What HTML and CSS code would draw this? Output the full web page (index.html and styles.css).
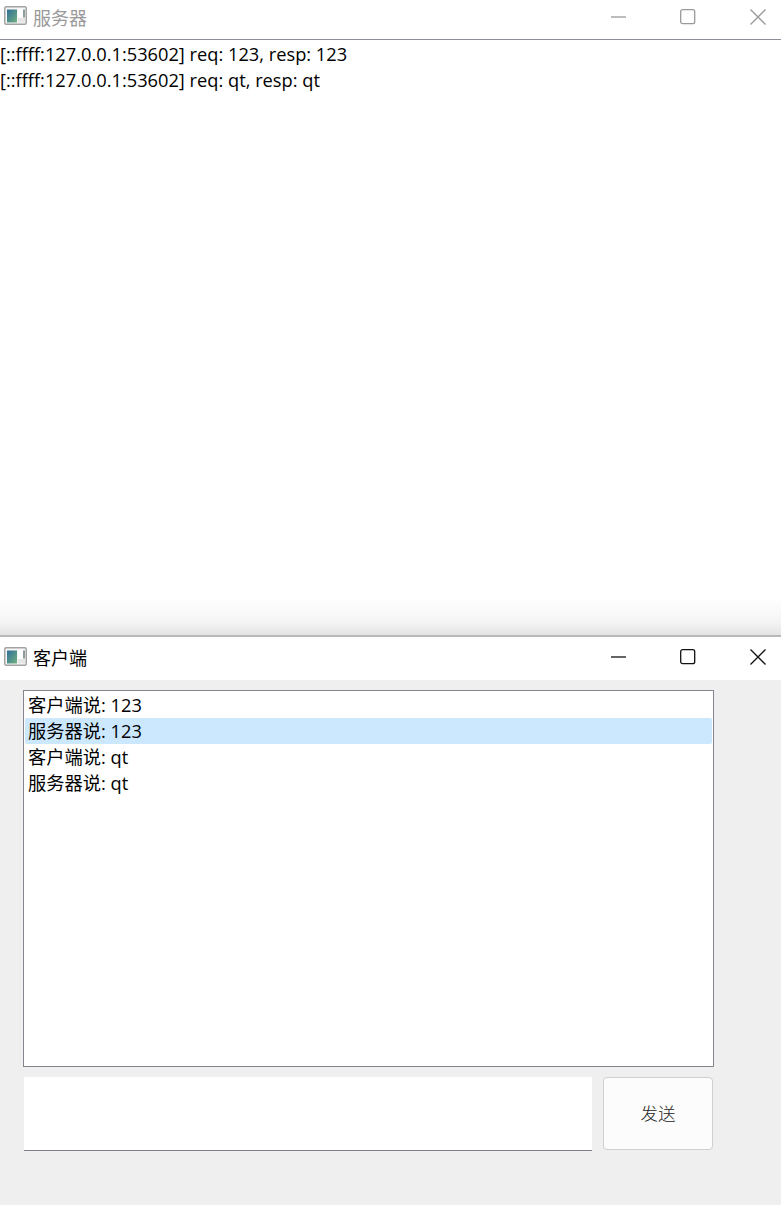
FILE: index.html
```html
<!DOCTYPE html>
<html lang="zh">
<head>
<meta charset="utf-8">
<title>服务器 / 客户端</title>
<link rel="stylesheet" href="styles.css">
</head>
<body>
<section class="window server">
  <header class="titlebar inactive">
    <svg class="appicon" width="23" height="19" viewBox="0 0 23 19">
      <defs>
        <linearGradient id="g" x1="0" y1="0" x2="1" y2="1"><stop offset="0" stop-color="#2f6f9a"/><stop offset="1" stop-color="#72b080"/></linearGradient>
      </defs>
      <rect x=".75" y=".75" width="21.500" height="17.500" rx="1.500" fill="#f6f6f6" stroke="#a3a3a3" stroke-width="1.500"/>
      <rect x="3" y="3.500" width="10" height="13" fill="url(#g)"/>
      <rect x="14" y="3.500" width="5" height="8" fill="#fff"/>
      <rect x="19" y="3.500" width="2" height="8" fill="#8f9a9a"/>
      <rect x="14" y="12" width="7" height="4.500" fill="#e6e6e6"/>
    </svg>
    <span class="title">服务器</span>
    <div class="controls">
      <svg width="16" height="16" viewBox="0 0 16 16"><path d="M0 8H15"/></svg>
      <svg width="16" height="16" viewBox="0 0 16 16"><rect x=".7" y=".7" width="14" height="14" rx="2"/></svg>
      <svg width="17" height="16" viewBox="0 0 17 16"><path d="M1.500.5l15 15M16.500.5l-15 15"/></svg>
    </div>
  </header>
  <div class="log">
    <div>[::ffff:127.0.0.1:53602] req: 123, resp: 123</div>
    <div>[::ffff:127.0.0.1:53602] req: qt, resp: qt</div>
  </div>
</section>
<section class="window client">
  <header class="titlebar">
    <svg class="appicon" width="23" height="19" viewBox="0 0 23 19">
      <rect x=".75" y=".75" width="21.500" height="17.500" rx="1.500" fill="#f6f6f6" stroke="#a3a3a3" stroke-width="1.500"/>
      <rect x="3" y="3.500" width="10" height="13" fill="url(#g)"/>
      <rect x="14" y="3.500" width="5" height="8" fill="#fff"/>
      <rect x="19" y="3.500" width="2" height="8" fill="#8f9a9a"/>
      <rect x="14" y="12" width="7" height="4.500" fill="#e6e6e6"/>
    </svg>
    <span class="title">客户端</span>
    <div class="controls">
      <svg width="16" height="16" viewBox="0 0 16 16"><path d="M0 8H15"/></svg>
      <svg width="16" height="16" viewBox="0 0 16 16"><rect x=".7" y=".7" width="14" height="14" rx="2"/></svg>
      <svg width="17" height="16" viewBox="0 0 17 16"><path d="M1.500.5l15 15M16.500.5l-15 15"/></svg>
    </div>
  </header>
  <main class="body">
    <ul class="list">
      <li>客户端说: 123</li>
      <li class="selected">服务器说: 123</li>
      <li>客户端说: qt</li>
      <li>服务器说: qt</li>
    </ul>
    <div class="sendrow">
      <div class="input"></div>
      <button class="send" type="button"><span class="sendlabel">发送</span></button>
    </div>
  </main>
</section>
</body>
</html>
```
FILE: styles.css
```css
* { box-sizing: border-box; }
html, body { margin: 0; padding: 0; }
body {
  width: 781px;
  height: 1205px;
  overflow: hidden;
  display: flex;
  flex-direction: column;
  background: #fff;
  font-family: "Open Sans", "Noto Sans CJK SC", sans-serif;
  font-size: 18.25px;
  color: #000;
}
.window { display: flex; flex-direction: column; }
.server { height: 635px; background: linear-gradient(to bottom, #fff 0, #fff 598px, #f6f6f6 620px, #e4e4e4 635px); }
.client { flex: 1; border-top: 2px solid #b9b9b9; }
.titlebar {
  height: 40px;
  flex: none;
  display: flex;
  align-items: center;
  padding-left: 4px;
  padding-bottom: 6px;
  background: #fff;
}
.server .titlebar { border-bottom: 1px solid #8f8f9a; }
.client .titlebar { height: 43px; padding-bottom: 3px; }
.appicon { flex: none; margin-bottom: 2px; }
.title { margin-left: 6px; font-size: 18px; }
.inactive .title { color: #999; }
.controls { margin-left: auto; display: flex; gap: 53px; padding-right: 15px; }
.controls svg { display: block; fill: none; stroke: #111; stroke-width: 1.300; }
.inactive .controls svg { stroke: #999; }
.log { line-height: 26px; padding-top: 1px; white-space: nowrap; }
.body {
  flex: 1;
  background: #efefef;
  padding: 10px 67px 0 23px;
  display: flex;
  flex-direction: column;
}
.list {
  list-style: none;
  margin: 0;
  height: 377px;
  padding: 1px;
  background: #fff;
  border: 1px solid #85858f;
}
.list li { height: 26px; line-height: 26px; padding-left: 3px; white-space: nowrap; }
.list .selected { background: #cce8ff; border-radius: 2px; }
.sendrow { display: flex; margin-top: 10px; padding-left: 1px; }
.input {
  width: 568px;
  height: 74px;
  background: #fff;
  border-bottom: 1px solid #80808a;
}
.send {
  width: 110px;
  height: 73px;
  margin-left: 11px;
  padding: 0 0 3px;
  background: #fcfcfc;
  border: 1px solid #cfcfcf;
  border-radius: 4px;
  font-family: "Noto Sans CJK SC", sans-serif;
  font-size: 17.500px;
  font-weight: 300;
  color: #222;
}
```
